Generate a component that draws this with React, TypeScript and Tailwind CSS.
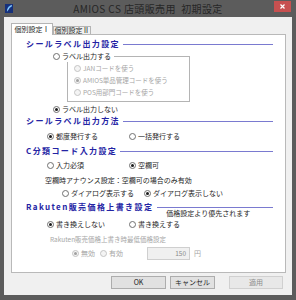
import React from "react";

const font = { fontFamily: '"Noto Sans CJK JP", "Noto Sans", sans-serif' };

function Radio({ checked, disabled }: { checked?: boolean; disabled?: boolean }) {
  return (
    <span
      className={`w-[7px] h-[7px] rounded-full border flex items-center justify-center shrink-0 ${
        disabled ? "border-[#c4c4c4] bg-[#f4f4f4]" : "border-[#707070] bg-white"
      }`}
    >
      {checked && (
        <span className={`w-[3px] h-[3px] rounded-full ${disabled ? "bg-[#a0a0a0]" : "bg-[#1a1a1a]"}`} />
      )}
    </span>
  );
}

function Option({
  label,
  checked,
  disabled,
  className = "",
}: {
  label: string;
  checked?: boolean;
  disabled?: boolean;
  className?: string;
}) {
  return (
    <div className={`flex items-center gap-[2px] shrink-0 ${className}`}>
      <Radio checked={checked} disabled={disabled} />
      <span className={`leading-none whitespace-nowrap ${disabled ? "text-[#a6a6a6]" : "text-[#1e1e1e]"}`}>{label}</span>
    </div>
  );
}

function SectionHeader({ text }: { text: string }) {
  return (
    <div className="flex items-center h-[12px] pl-[14px] pr-[12px]">
      <span className="text-[8px] font-bold tracking-[1.4px] text-[#2424a4] leading-none whitespace-nowrap">{text}</span>
      <div className="flex-1 h-px bg-[#7a7ad0] ml-[3px]" />
    </div>
  );
}

export default function App() {
  return (
    <div className="w-[296px] h-[300px] bg-[#5c5c5c] flex flex-col" style={font}>
      {/* title bar */}
      <div className="h-[17px] grid grid-cols-[1fr_auto_1fr] items-center shrink-0">
        <div className="pl-[5px] flex items-center">
          <svg width="8" height="9" viewBox="0 0 8 9">
            <rect width="8" height="9" fill="#16307a" />
            <path d="M6.5 1 C3 2 1.5 5 2 8 C3 6 4.5 3.5 7 2.5 Z" fill="#4aa3ef" />
            <path d="M6.8 1.2 C4.5 2.5 3.2 4.5 2.6 6.6" stroke="#d6ecff" strokeWidth="0.6" fill="none" />
          </svg>
        </div>
        <div className="text-[10px] tracking-[0.4px] text-[#262626] leading-none whitespace-nowrap">
          AMIOS CS 店頭販売用&nbsp;&nbsp;初期設定
        </div>
        <div className="flex justify-end self-start pr-[5px] pt-[1px]">
          <div className="w-[17px] h-[11px] bg-[#c75050] flex items-center justify-center">
            <svg width="5" height="5" viewBox="0 0 5 5">
              <path d="M0.5 0.5 L4.5 4.5 M4.5 0.5 L0.5 4.5" stroke="#ffffff" strokeWidth="1.2" />
            </svg>
          </div>
        </div>
      </div>

      {/* client */}
      <div className="mx-[4px] mb-[5px] flex-1 bg-[#f0f0f0] pt-[6px] pl-[7px] text-[7px]">
        {/* tabs */}
        <div className="flex items-end h-[11px]">
          <div className="relative z-10 h-[12px] w-[42px] -mb-px bg-white border border-b-0 border-[#b4b4b4] flex items-center justify-center leading-none text-[#1e1e1e]">
            個別設定Ⅰ
          </div>
          <div className="h-[8px] w-[38px] bg-[#f0f0f0] border border-b-0 border-[#b4b4b4] flex items-center justify-center leading-none text-[#1e1e1e]">
            個別設定Ⅱ
          </div>
        </div>

        {/* panel */}
        <div className="relative w-[275px] h-[239px] bg-white border border-[#b9b9b9] pt-[3px]">
          <SectionHeader text="シールラベル出力設定" />

          <div className="relative ml-[55px] mt-[6px] w-[123px] h-[46px] border border-[#b4b4b4] pt-[5px] pl-[6px] text-[6.5px]">
            <div className="absolute left-[-15px] top-[-7px] h-[12px] bg-white pr-[3px] flex items-center text-[7px]">
              <Option label="ラベル出力する" />
            </div>
            <div className="h-[12px] flex items-center">
              <Option label="JANコードを使う" disabled />
            </div>
            <div className="h-[12px] flex items-center">
              <Option label="AMIOS単品管理コードを使う" checked disabled />
            </div>
            <div className="h-[12px] flex items-center">
              <Option label="POS用部門コードを使う" disabled />
            </div>
          </div>

          <div className="h-[12px] mt-px flex items-center pl-[41px]">
            <Option label="ラベル出力しない" checked />
          </div>

          <SectionHeader text="シールラベル出力方法" />

          <div className="h-[12px] mt-[3px] flex items-center pl-[35px]">
            <Option label="都度発行する" checked className="w-[82px]" />
            <Option label="一括発行する" />
          </div>

          <div className="mt-[3px]">
            <SectionHeader text="C分類コード入力設定" />
          </div>

          <div className="h-[12px] mt-[2px] flex items-center pl-[35px]">
            <Option label="入力必須" className="w-[82px]" />
            <Option label="空欄可" checked />
          </div>

          <div className="h-[12px] mt-[3px] flex items-center pl-[33px] leading-none text-[#1e1e1e]">
            空欄時アナウンス設定：空欄可の場合のみ有効
          </div>

          <div className="h-[12px] mt-px flex items-center pl-[50px]">
            <Option label="ダイアログ表示する" className="w-[82px]" />
            <Option label="ダイアログ表示しない" checked />
          </div>

          <div className="mt-[2px] flex items-start pl-[14px] pr-[12px]">
            <span className="h-[12px] flex items-center text-[8px] font-bold tracking-[1.4px] text-[#2424a4] leading-none whitespace-nowrap">
              Rakuten販売価格上書き設定
            </span>
            <div className="flex-1 ml-[4px] pt-[6px] flex flex-col">
              <div className="h-px bg-[#7a7ad0]" />
              <div className="ml-[9px] mt-[2px] leading-none text-[#1e1e1e] whitespace-nowrap">価格設定より優先されます</div>
            </div>
          </div>

          <div className="h-[12px] mt-px flex items-center pl-[35px]">
            <Option label="書き換えしない" checked className="w-[82px]" />
            <Option label="書き換えする" />
          </div>

          <div className="h-[12px] mt-[3px] flex items-center pl-[38px] leading-none text-[6.5px] text-[#a6a6a6] whitespace-nowrap">
            Rakuten販売価格上書き時最低価格設定
          </div>

          <div className="h-[13px] mt-[2px] flex items-center pl-[60px]">
            <Option label="無効" checked disabled className="w-[28px]" />
            <Option label="有効" disabled className="w-[47px]" />
            <div className="w-[43px] h-[13px] border border-[#cfcfcf] bg-[#f0f0f0] flex items-center justify-end pr-[3px] leading-none text-[#8a8a8a] text-[6.5px]">
              150
            </div>
            <span className="ml-[4px] leading-none text-[#a6a6a6]">円</span>
          </div>
        </div>

        {/* buttons */}
        <div className="flex mt-[3px] ml-[100px]">
          <div className="w-[55px] h-[13px] bg-[#e1e1e1] border border-[#adadad] flex items-center justify-center leading-none text-[#1e1e1e]">
            OK
          </div>
          <div className="w-[45px] h-[13px] ml-[4px] bg-[#e1e1e1] border border-[#adadad] flex items-center justify-center leading-none text-[#1e1e1e]">
            キャンセル
          </div>
          <div className="w-[54px] h-[13px] ml-[14px] bg-[#e8e8e8] border border-[#d0d0d0] flex items-center justify-center leading-none text-[#8c8c8c]">
            適用
          </div>
        </div>
      </div>
    </div>
  );
}
